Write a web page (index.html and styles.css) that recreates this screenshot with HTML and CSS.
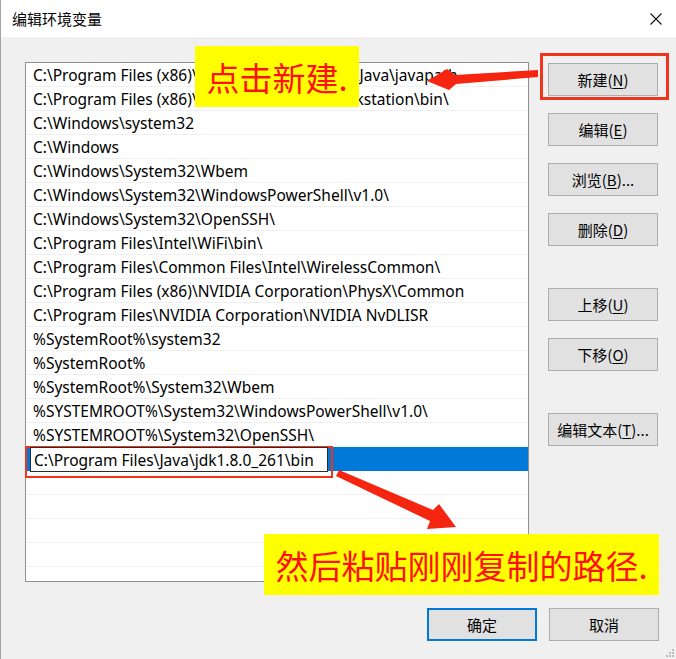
FILE: index.html
```html
<!DOCTYPE html>
<html lang="zh-CN">
<head>
<meta charset="utf-8">
<title>编辑环境变量</title>
<link rel="stylesheet" href="styles.css">
</head>
<body>
<div class="window">
  <header class="titlebar">
    <span class="title">编辑环境变量</span>
    <svg class="close" width="12" height="12" viewBox="0 0 12 12"><path d="M0.5 0.5 L11.5 11.5 M11.5 0.5 L0.5 11.5" stroke="#111" stroke-width="1.1" fill="none"/></svg>
  </header>
  <div class="content">
    <div class="main">
      <div class="listbox">
        <div class="row">C:\Program Files (x86)\Common Files\Oracle\Java\javapath</div>
        <div class="row">C:\Program Files (x86)\VMware\VMware Workstation\bin\</div>
        <div class="row">C:\Windows\system32</div>
        <div class="row">C:\Windows</div>
        <div class="row">C:\Windows\System32\Wbem</div>
        <div class="row">C:\Windows\System32\WindowsPowerShell\v1.0\</div>
        <div class="row">C:\Windows\System32\OpenSSH\</div>
        <div class="row">C:\Program Files\Intel\WiFi\bin\</div>
        <div class="row">C:\Program Files\Common Files\Intel\WirelessCommon\</div>
        <div class="row">C:\Program Files (x86)\NVIDIA Corporation\PhysX\Common</div>
        <div class="row">C:\Program Files\NVIDIA Corporation\NVIDIA NvDLISR</div>
        <div class="row">%SystemRoot%\system32</div>
        <div class="row">%SystemRoot%</div>
        <div class="row">%SystemRoot%\System32\Wbem</div>
        <div class="row">%SYSTEMROOT%\System32\WindowsPowerShell\v1.0\</div>
        <div class="row">%SYSTEMROOT%\System32\OpenSSH\</div>
        <div class="row selected"><div class="editbox">C:\Program Files\Java\jdk1.8.0_261\bin</div></div>
        <div class="row"></div>
        <div class="row"></div>
        <div class="row"></div>
        <div class="row"></div>
        <div class="row"></div>
      </div>
      <div class="side">
        <button class="btn">新建(<u>N</u>)</button>
        <button class="btn">编辑(<u>E</u>)</button>
        <button class="btn">浏览(<u>B</u>)...</button>
        <button class="btn">删除(<u>D</u>)</button>
        <button class="btn group">上移(<u>U</u>)</button>
        <button class="btn">下移(<u>O</u>)</button>
        <button class="btn group">编辑文本(<u>T</u>)...</button>
      </div>
    </div>
    <div class="footer">
      <button class="btn default">确定</button>
      <button class="btn">取消</button>
    </div>
  </div>

  <div class="note note-new">点击新建.</div>
  <div class="note note-paste">然后粘贴刚刚复制的路径.</div>
  <div class="mark mark-new"></div>
  <div class="mark mark-edit"></div>
  <svg class="arrows" width="676" height="659" viewBox="0 0 676 659">
    <polygon fill="#f5250f" points="538,70 538,77 456,84 449,90 427,81 447,69 455,75"/>
    <polygon fill="#f5250f" points="336,476 339,470 433,510 439,504 456,527 427,529 430,521"/>
  </svg>
  <svg class="grip" width="9" height="9" viewBox="0 0 9 9">
    <rect x="7" y="1" width="2" height="2" fill="#bcbcbc"/>
    <rect x="4" y="4" width="2" height="2" fill="#bcbcbc"/>
    <rect x="7" y="4" width="2" height="2" fill="#bcbcbc"/>
    <rect x="1" y="7" width="2" height="2" fill="#bcbcbc"/>
    <rect x="4" y="7" width="2" height="2" fill="#bcbcbc"/>
    <rect x="7" y="7" width="2" height="2" fill="#bcbcbc"/>
  </svg>
</div>
</body>
</html>
```
FILE: styles.css
```css
* { box-sizing: border-box; }
html, body { margin: 0; padding: 0; }
body {
  width: 676px;
  height: 659px;
  overflow: hidden;
  background: #f0f0f0;
  font-family: "Noto Sans", "Noto Sans CJK SC", sans-serif;
}
.window {
  position: relative;
  width: 676px;
  height: 659px;
  background: #f0f0f0;
  border-left: 1px solid #a3a3a3;
}
.titlebar {
  height: 37px;
  background: #ffffff;
  display: flex;
  align-items: center;
  justify-content: space-between;
  padding: 0 14px 0 11px;
}
.title {
  font-family: "Noto Sans CJK SC", sans-serif;
  font-size: 15px;
  color: #000;
}
.content {
  padding: 25px 0 0 24px;
}
.main {
  display: flex;
  gap: 19px;
}
.listbox {
  width: 504px;
  height: 520px;
  border: 1px solid #8f8f8f;
  background: #fff;
  overflow: hidden;
}
.row {
  height: 24px;
  border-bottom: 1px solid #f0f0f0;
  padding: 2px 0 0 7px;
  font-size: 15.5px;
  line-height: 21px;
  color: #000;
  white-space: nowrap;
}
.row.selected {
  background: #0078d7;
  border-bottom-color: #0078d7;
  padding: 0 0 0 4px;
  position: relative;
}
.editbox {
  width: 298px;
  height: 25px;
  background: #fff;
  border: 1px solid #2b2b2b;
  padding: 1px 0 0 3px;
  line-height: 22px;
  position: relative;
  z-index: 1;
}
.side {
  width: 110px;
  padding-top: 1px;
  display: flex;
  flex-direction: column;
  gap: 17px;
}
.btn {
  width: 110px;
  height: 33px;
  background: #e1e1e1;
  border: 1px solid #adadad;
  font-family: "Noto Sans CJK SC", sans-serif;
  font-size: 15px;
  color: #000;
  padding: 0;
  margin: 0;
}
.btn u { text-underline-offset: 2px; }
.btn.group { margin-top: 25px; }
.btn.default { border: 2px solid #0078d7; }
.footer {
  display: flex;
  justify-content: flex-end;
  gap: 12px;
  margin-top: 26px;
  padding-right: 17px;
}
.note {
  position: absolute;
  background: #ffff00;
  color: #ff1010;
  font-family: "Noto Sans CJK SC", sans-serif;
  display: flex;
  align-items: center;
  justify-content: center;
  height: 61px;
  white-space: nowrap;
  font-size: 33px;
}
.note-new {
  left: 194px;
  top: 46px;
  width: 164px;
}
.note-paste {
  left: 263px;
  top: 534px;
  width: 395px;
}
.mark {
  position: absolute;
  border: 3px solid #f0341c;
}
.mark-new { left: 539px; top: 53px; width: 129px; height: 47px; }
.mark-edit { left: 24px; top: 446px; width: 308px; height: 32px; border-width: 2px; }
.arrows {
  position: absolute;
  left: -1px;
  top: 0;
  pointer-events: none;
}
.grip {
  position: absolute;
  right: 2px;
  bottom: 2px;
}
```
